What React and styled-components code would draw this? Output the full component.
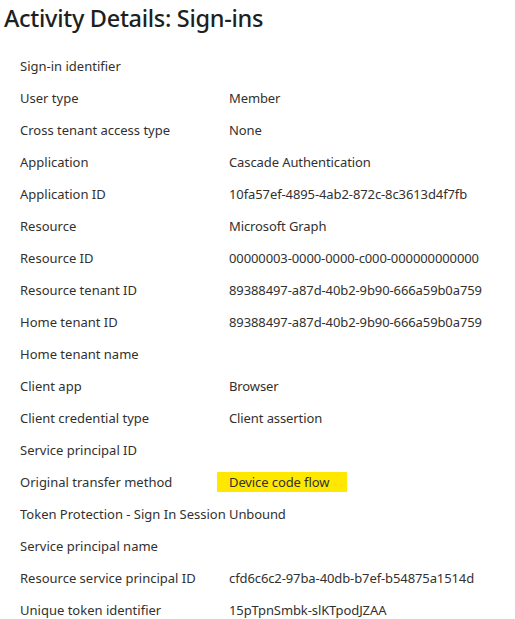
import styled, { createGlobalStyle } from "styled-components";

const GlobalStyle = createGlobalStyle`
  body {
    margin: 0;
    background: #fff;
    font-family: "Noto Sans", "Open Sans", sans-serif;
    color: #242424;
  }
`;

const Page = styled.div`
  width: 515px;
  height: 619px;
  overflow: hidden;
  padding: 2px 0 0 4px;
  box-sizing: border-box;
`;

const Title = styled.h1`
  margin: 0;
  font-size: 23.5px;
  font-weight: 500;
  line-height: 32px;
  color: #201f1e;
  letter-spacing: -0.3px;
`;

const List = styled.div`
  margin-top: 16px;
  padding-left: 16px;
`;

const Row = styled.div`
  display: grid;
  grid-template-columns: 209px 1fr;
  height: 32px;
  align-items: center;
  font-size: 13px;
`;

const Label = styled.span`
  color: #323130;
`;

const Value = styled.span`
  color: #323130;
  letter-spacing: -0.1px;
  ${(p) =>
    p.$highlight &&
    `
    justify-self: start;
    margin-left: -12px;
    padding: 1px 18px 1px 12px;
    background: #ffe800;
    border-radius: 1px;
  `}
`;

const rows = [
  ["Sign-in identifier", ""],
  ["User type", "Member"],
  ["Cross tenant access type", "None"],
  ["Application", "Cascade Authentication"],
  ["Application ID", "10fa57ef-4895-4ab2-872c-8c3613d4f7fb"],
  ["Resource", "Microsoft Graph"],
  ["Resource ID", "00000003-0000-0000-c000-000000000000"],
  ["Resource tenant ID", "89388497-a87d-40b2-9b90-666a59b0a759"],
  ["Home tenant ID", "89388497-a87d-40b2-9b90-666a59b0a759"],
  ["Home tenant name", ""],
  ["Client app", "Browser"],
  ["Client credential type", "Client assertion"],
  ["Service principal ID", ""],
  ["Original transfer method", "Device code flow", true],
  ["Token Protection - Sign In Session", "Unbound"],
  ["Service principal name", ""],
  ["Resource service principal ID", "cfd6c6c2-97ba-40db-b7ef-b54875a1514d"],
  ["Unique token identifier", "15pTpnSmbk-slKTpodJZAA"],
];

export default function App() {
  return (
    <>
      <GlobalStyle />
      <Page>
        <Title>Activity Details: Sign-ins</Title>
        <List>
          {rows.map(([label, value, hl]) => (
            <Row key={label}>
              <Label>{label}</Label>
              <Value $highlight={hl}>{value}</Value>
            </Row>
          ))}
        </List>
      </Page>
    </>
  );
}
